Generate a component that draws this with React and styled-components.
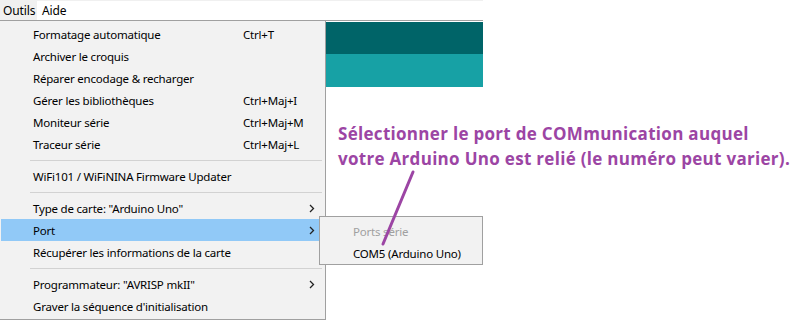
import React from "react";
import styled, { createGlobalStyle } from "styled-components";

const Global = createGlobalStyle`
  html, body { margin: 0; padding: 0; background: #ffffff; }
  body { font-family: "Noto Sans", "Segoe UI", sans-serif; }
  * { box-sizing: border-box; }
`;

const Page = styled.div`
  position: relative;
  width: 811px;
  height: 321px;
  overflow: hidden;
  background: #ffffff;
`;

const Window = styled.div`
  width: 483px;
  display: flex;
  flex-direction: column;
`;

const MenuBar = styled.div`
  display: flex;
  height: 21px;
  border-top: 1px solid #f0f0f0;
  border-bottom: 1px solid #a0a0a0;
  background: #ffffff;
`;

const MenuTitle = styled.div`
  display: flex;
  align-items: center;
  padding-left: ${(p) => p.$pl}px;
  height: 19px;
  font-size: 12px;
  letter-spacing: -0.1px;
  color: #000;
  background: ${(p) => (p.$active ? "#f0f0f0" : "transparent")};
  width: ${(p) => p.$w}px;
`;

const Body = styled.div`
  display: flex;
  align-items: flex-start;
`;

const Dropdown = styled.div`
  width: 326px;
  flex: none;
  background: #f2f2f2;
  border-right: 1px solid #a0a0a0;
  border-bottom: 1px solid #a0a0a0;
  padding: 2px 0 2px 0;
  display: flex;
  flex-direction: column;
`;

const Item = styled.div`
  display: grid;
  grid-template-columns: 210px 1fr 12px;
  align-items: center;
  height: 22px;
  margin: 0 4px 0 1px;
  padding-left: 32px;
  font-size: 11.5px;
  letter-spacing: -0.2px;
  color: ${(p) => (p.$disabled ? "#9a9a9a" : "#000")};
  background: ${(p) => (p.$selected ? "#91c9f7" : "transparent")};
  white-space: nowrap;
`;

const Shortcut = styled.span`
  color: #000;
`;

const Separator = styled.div`
  height: 10px;
  display: flex;
  align-items: center;
  padding-left: 30px;
  margin-right: 3px;
  &::after {
    content: "";
    flex: 1;
    height: 1px;
    background: #d2d2d2;
  }
`;

const Arrow = () => (
  <svg width="6" height="9" viewBox="0 0 6 9">
    <polyline points="1,1 4.5,4.5 1,8" fill="none" stroke="#222" strokeWidth="1.3" />
  </svg>
);

const Editor = styled.div`
  flex: 1;
  display: flex;
  flex-direction: column;
  min-width: 0;
`;

const TealBar = styled.div`
  width: 157px;
  height: ${(p) => p.$h}px;
  background: ${(p) => p.$color};
  margin-top: ${(p) => p.$mt || 0}px;
`;

const Callout = styled.div`
  margin-top: 34px;
  padding-left: 12px;
  width: 480px;
  font-family: "Open Sans", "Noto Sans", sans-serif;
  font-weight: 700;
  font-size: 17px;
  letter-spacing: 0.3px;
  line-height: 25px;
  color: #9c45a4;
  white-space: nowrap;
`;

const SubMenu = styled.div`
  position: absolute;
  left: 319px;
  top: 216px;
  width: 164px;
  height: 49px;
  background: #f2f2f2;
  border: 1px solid #a0a0a0;
  padding-top: 3px;
  display: flex;
  flex-direction: column;
`;

const SubItem = styled.div`
  height: 22px;
  display: flex;
  align-items: center;
  padding-left: 33px;
  font-size: 11.5px;
  letter-spacing: -0.2px;
  color: ${(p) => (p.$disabled ? "#a0a0a0" : "#000")};
`;

const Overlay = styled.svg`
  position: absolute;
  left: 0;
  top: 0;
  pointer-events: none;
`;

const items = [
  { label: "Formatage automatique", sc: "Ctrl+T" },
  { label: "Archiver le croquis" },
  { label: "Réparer encodage & recharger" },
  { label: "Gérer les bibliothèques", sc: "Ctrl+Maj+I" },
  { label: "Moniteur série", sc: "Ctrl+Maj+M" },
  { label: "Traceur série", sc: "Ctrl+Maj+L" },
  { sep: true },
  { label: "WiFi101 / WiFiNINA Firmware Updater" },
  { sep: true },
  { label: 'Type de carte: "Arduino Uno"', arrow: true },
  { label: "Port", arrow: true, selected: true },
  { label: "Récupérer les informations de la carte" },
  { sep: true },
  { label: 'Programmateur: "AVRISP mkII"', arrow: true },
  { label: "Graver la séquence d'initialisation" },
];

export default function App() {
  return (
    <Page>
      <Global />
      <Window>
        <MenuBar>
          <MenuTitle $active $pl={3} $w={37}>Outils</MenuTitle>
          <MenuTitle $pl={5} $w={40}>Aide</MenuTitle>
        </MenuBar>
        <Body>
          <Dropdown>
            {items.map((it, i) =>
              it.sep ? (
                <Separator key={i} />
              ) : (
                <Item key={i} $selected={it.selected}>
                  <span>{it.label}</span>
                  <Shortcut>{it.sc || ""}</Shortcut>
                  <span>{it.arrow ? <Arrow /> : null}</span>
                </Item>
              )
            )}
          </Dropdown>
          <Editor>
            <TealBar $h={32} $color="#006468" $mt={1} />
            <TealBar $h={33} $color="#17a1a5" />
            <Callout>
              Sélectionner le port de COMmunication auquel
              <br />
              votre Arduino Uno est relié (le numéro peut varier).
            </Callout>
          </Editor>
        </Body>
      </Window>
      <SubMenu>
        <SubItem $disabled>Ports série</SubItem>
        <SubItem>COM5 (Arduino Uno)</SubItem>
      </SubMenu>
      <Overlay width="811" height="321">
        <line x1="413" y1="172" x2="383" y2="244" stroke="#9c45a4" strokeWidth="3" strokeLinecap="round" />
      </Overlay>
    </Page>
  );
}
